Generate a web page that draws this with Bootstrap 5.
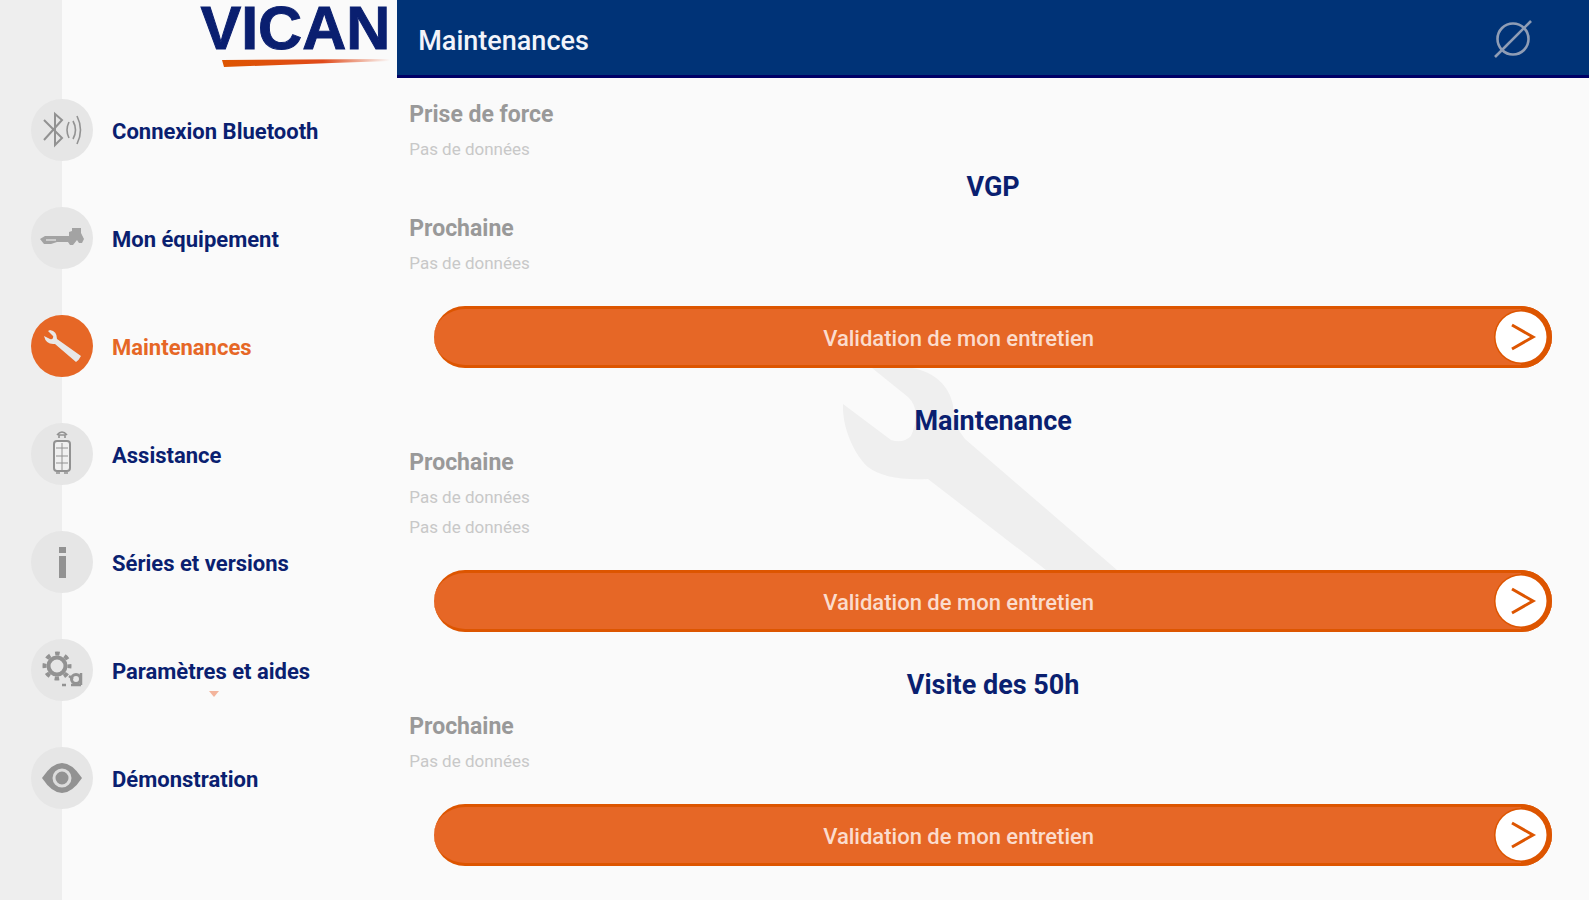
<!DOCTYPE html>
<html lang="fr">
<head>
<meta charset="utf-8">
<meta name="viewport" content="width=device-width, initial-scale=1">
<title>Vican - Maintenances</title>
<link rel="stylesheet" href="https://cdn.jsdelivr.net/npm/bootstrap@5.3.0/dist/css/bootstrap.min.css">
<style>
  :root { --navy: #0a1f70; --bar: #003377; --orange: #e66726; --orange-edge: #dd5500; }
  body { font-family: Roboto, "Liberation Sans", sans-serif; background: #fafafa; }
  .sidebar { background: linear-gradient(to right, #eee 62px, transparent 62px); }
  .brand-box { height: 78px; padding-right: 7px; margin-bottom: 21px; }
  .brand-name { font: bold 61px/56px "Liberation Sans", sans-serif; color: var(--navy); -webkit-text-stroke: 1px var(--navy); }
  .brand-swoosh { width: 168px; height: 10px; margin-top: 2px; }
  .side-link { height: 62px; margin-bottom: 46px; padding-left: 31px; gap: 19px; font-size: 22px; font-weight: 700; color: var(--navy); position: relative; }
  .side-link.current { color: var(--orange); }
  .side-text { padding-top: 2px; }
  .disc { width: 62px; height: 62px; background: #e6e6e6; color: #929292; }
  .current .disc { background: var(--orange); color: #e8e8e8; }
  .disc svg { width: 62px; height: 62px; display: block; }
  .hint-mark { left: 209px; bottom: 4px; }
  .topbar { height: 78px; background: var(--bar); border-bottom: 3px solid #000066; padding: 6px 57px 0 21px; }
  .topbar h1 { font-size: 27px; line-height: 36px; font-weight: 500; color: #f2f4fa; }
  .content-area { padding: 18px 12px 32px 12px; }
  .block-title { font-size: 27px; line-height: 46px; font-weight: 700; color: var(--navy); }
  .block + .block { padding-top: 30px; }
  .first-block + .block { padding-top: 0; }
  .label-line { font-size: 23px; line-height: 38px; font-weight: 700; color: #999; }
  .value-line { font-size: 17px; line-height: 30px; color: #c8c8c8; }
  .btn-validate { height: 62px; margin: 28px 25px 0; width: calc(100% - 50px); background: var(--orange); border: 0; border-block: 3px solid var(--orange-edge); border-radius: 31px; padding: 0; font-size: 22px; font-weight: 500; color: #fbdccd; }
  .btn-validate span { padding-top: 3px; }
  .btn-validate .cap { width: 69px; height: 62px; margin: -3px 0; }
  .watermark { width: 306px; height: 202px; }
</style>
</head>
<body>
<div class="container-fluid p-0">
  <div class="row g-0 min-vh-100">
    <nav class="col-3 sidebar" aria-label="Menu principal">
      <div class="brand-box d-flex flex-column align-items-end">
        <span class="brand-name">VICAN</span>
        <svg class="brand-swoosh" viewBox="0 0 168 10" aria-hidden="true">
          <defs><linearGradient id="sw"><stop offset="0" stop-color="#dd5500"/><stop offset=".6" stop-color="#e04a1a"/><stop offset="1" stop-color="#e04a1a" stop-opacity="0"/></linearGradient></defs>
          <path d="M0 2L168 1V3L110 5L2 9Z" fill="url(#sw)"/>
        </svg>
      </div>
      <a href="#" class="side-link d-flex align-items-center text-decoration-none">
        <span class="disc rounded-circle"><svg viewBox="0 0 62 62" fill="none" stroke="currentColor" stroke-width="2"><path d="M13 21L31 39L24 46V15L31 21L13 41"/><path d="M38 23Q34 31 38 39M42 22Q47 31 42 40M46 17Q53 31 46 45" stroke-width="1.6"/></svg></span>
        <span class="side-text">Connexion Bluetooth</span>
      </a>
      <a href="#" class="side-link d-flex align-items-center text-decoration-none">
        <span class="disc rounded-circle"><svg viewBox="0 0 62 62" fill="currentColor"><path d="M9 32L14 29H38V25L41 24V21H50V26L53 32L51 36H48L46 33L42 38H39L37 35H26L20 37H13Z" opacity=".8"/><path d="M15 33H25" stroke="#ccc" stroke-width="2"/></svg></span>
        <span class="side-text">Mon équipement</span>
      </a>
      <a href="#" class="side-link current d-flex align-items-center text-decoration-none" aria-current="page">
        <span class="disc rounded-circle"><svg viewBox="0 0 62 62" fill="currentColor"><path d="M19 15Q26 16 26 24L50 41Q48 45 45 47L24 29Q15 30 13 21L19 24Q21 25 22 23Q23 21 21 20L17 16Z"/></svg></span>
        <span class="side-text">Maintenances</span>
      </a>
      <a href="#" class="side-link d-flex align-items-center text-decoration-none">
        <span class="disc rounded-circle"><svg viewBox="0 0 62 62" fill="none" stroke="currentColor"><rect x="23" y="18" width="16" height="30" rx="3" stroke-width="2" fill="#f0f0f0"/><path d="M31 20V48M25 25H37M25 33H37M25 40H37" stroke-width="1"/><path d="M25 50H29M33 50H37M28 15V12H34V15M26 12Q31 6 36 12" stroke-width="1.6"/></svg></span>
        <span class="side-text">Assistance</span>
      </a>
      <a href="#" class="side-link d-flex align-items-center text-decoration-none">
        <span class="disc rounded-circle"><svg viewBox="0 0 62 62" fill="currentColor"><path d="M28 16H35V22H28ZM28 25H35V47H28Z"/></svg></span>
        <span class="side-text">Séries et versions</span>
      </a>
      <a href="#" class="side-link d-flex align-items-center text-decoration-none">
        <span class="disc rounded-circle"><svg viewBox="0 0 62 62" fill="none" stroke="currentColor"><circle cx="26" cy="27" r="8.5" stroke-width="4"/><circle cx="26" cy="27" r="12.5" stroke-width="4" stroke-dasharray="4.6 5.217" stroke-dashoffset="2.3"/><circle cx="45" cy="40" r="4.5" stroke-width="3"/><path d="M38 37L42 40M50 34V46M31 46H35M40 46H50" stroke-width="2.5"/></svg></span>
        <span class="side-text">Paramètres et aides</span>
        <svg class="hint-mark position-absolute" width="10" height="6" viewBox="0 0 10 6" aria-hidden="true"><path d="M0 0H10L5 6Z" fill="#f3b49c"/></svg>
      </a>
      <a href="#" class="side-link d-flex align-items-center text-decoration-none">
        <span class="disc rounded-circle"><svg viewBox="0 0 62 62" fill="currentColor"><path d="M11 31Q31 1 51 31Q31 61 11 31Z"/><circle cx="31" cy="31" r="8" fill="#929292" stroke="#dcdcdc" stroke-width="3"/></svg></span>
        <span class="side-text">Démonstration</span>
      </a>
    </nav>

    <div class="col-9">
      <header class="topbar d-flex align-items-center justify-content-between">
        <h1 class="m-0">Maintenances</h1>
        <svg class="mb-1" width="38" height="38" viewBox="0 0 38 38" fill="none" stroke="#8f9db5" stroke-width="2.6" role="img" aria-label="Non connecté"><circle cx="19" cy="19" r="15.5"/><path d="M1 37L37 1"/></svg>
      </header>
      <main class="content-area">
        <section class="block first-block">
          <div class="label-line">Prise de force</div>
          <div class="value-line">Pas de données</div>
        </section>
        <section class="block">
          <h2 class="block-title text-center m-0">VGP</h2>
          <div class="label-line">Prochaine</div>
          <div class="value-line">Pas de données</div>
          <button type="button" class="btn-validate d-flex align-items-center">
            <span class="flex-fill text-center">Validation de mon entretien</span>
            <svg class="cap" viewBox="0 0 69 62" aria-hidden="true"><path d="M38 0A31 31 0 0 1 38 62Z" fill="#dd5500"/><circle cx="38" cy="31" r="27" fill="#dd5500"/><circle cx="38" cy="31" r="25.5" fill="#fff"/><path d="M29 19L50 31L29 43" fill="none" stroke="#dd5500" stroke-width="3"/></svg>
          </button>
        </section>
        <section class="block position-relative">
          <svg class="watermark position-absolute top-0 start-50 translate-middle-x" viewBox="840 368 306 202" aria-hidden="true"><path d="M872 368L908 397Q922 410 911 436Q903 444 891 440L843 404C842 430 856 456 868 467Q886 481 928 479L1046 570H1117L965 439Q953 425 953 405C949 386 935 372 912 368Z" fill="#efefef"/></svg>
          <div class="position-relative">
            <h2 class="block-title text-center m-0">Maintenance</h2>
            <div class="label-line">Prochaine</div>
            <div class="value-line">Pas de données</div>
            <div class="value-line">Pas de données</div>
            <button type="button" class="btn-validate d-flex align-items-center">
              <span class="flex-fill text-center">Validation de mon entretien</span>
              <svg class="cap" viewBox="0 0 69 62" aria-hidden="true"><path d="M38 0A31 31 0 0 1 38 62Z" fill="#dd5500"/><circle cx="38" cy="31" r="27" fill="#dd5500"/><circle cx="38" cy="31" r="25.5" fill="#fff"/><path d="M29 19L50 31L29 43" fill="none" stroke="#dd5500" stroke-width="3"/></svg>
            </button>
          </div>
        </section>
        <section class="block">
          <h2 class="block-title text-center m-0">Visite des 50h</h2>
          <div class="label-line">Prochaine</div>
          <div class="value-line">Pas de données</div>
          <button type="button" class="btn-validate d-flex align-items-center">
            <span class="flex-fill text-center">Validation de mon entretien</span>
            <svg class="cap" viewBox="0 0 69 62" aria-hidden="true"><path d="M38 0A31 31 0 0 1 38 62Z" fill="#dd5500"/><circle cx="38" cy="31" r="27" fill="#dd5500"/><circle cx="38" cy="31" r="25.5" fill="#fff"/><path d="M29 19L50 31L29 43" fill="none" stroke="#dd5500" stroke-width="3"/></svg>
          </button>
        </section>
      </main>
    </div>
  </div>
</div>
<script src="https://cdn.jsdelivr.net/npm/bootstrap@5.3.0/dist/js/bootstrap.bundle.min.js"></script>
</body>
</html>
